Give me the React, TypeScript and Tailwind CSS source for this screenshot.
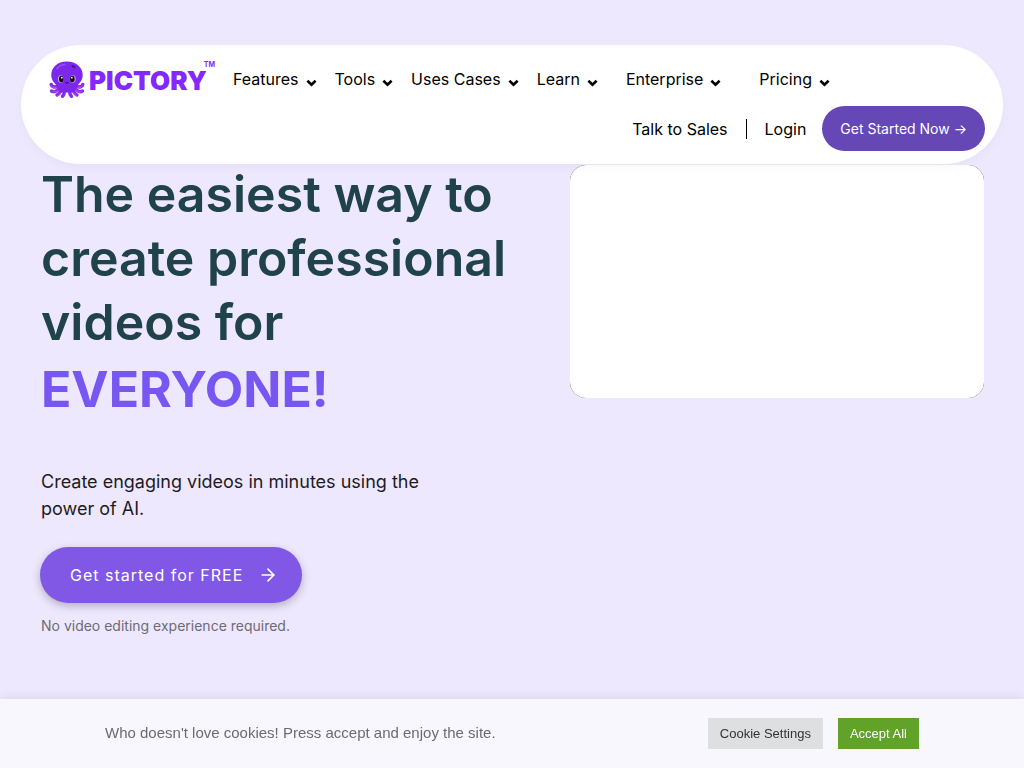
import { ArrowRight } from "lucide-react";

const menu = [
  { label: "Features", className: "mr-[18px]" },
  { label: "Tools", className: "mr-[18px]" },
  { label: "Uses Cases", className: "mr-[18px]" },
  { label: "Learn", className: "mr-7" },
  { label: "Enterprise", className: "mr-[38px]" },
  { label: "Pricing", className: "" },
];

function Octopus() {
  return (
    <svg viewBox="0 0 36 38" className="h-[38px] w-9 shrink-0" fill="none" aria-hidden="true">
      <g stroke="#8a2be8" strokeWidth="3.400" strokeLinecap="round" strokeLinejoin="round">
        <path d="M9 25c-3.500 2-6.500.5-6.800-1.500" />
        <path d="M27 25c3.500 2 6.500.5 6.800-1.500" />
        <path d="M10 27c-2 3.500-5 4.500-7.500 3" />
        <path d="M26 27c2 3.500 5 4.500 7.500 3" />
        <path d="M12 28c-.5 3-2 5-4 6" />
        <path d="M24 28c.5 3 2 5 4 6" />
        <path d="M15.500 29c0 3-.5 5-2 6.300" />
        <path d="M20.500 29c0 3 .5 5 2 6.300" />
      </g>
      <g stroke="#c94df0" strokeWidth="1" strokeLinecap="round">
        <path d="M7 26.500c-1.500.5-3 .2-4-1" />
        <path d="M29 26.500c1.500.5 3 .2 4-1" />
        <path d="M8.500 29.500c-1.200 1.200-3 1.700-4.500 1.200" />
        <path d="M27.500 29.500c1.200 1.200 3 1.700 4.500 1.200" />
        <path d="M11.500 32c-.5 1-1.500 2-2.800 2.500" />
        <path d="M24.500 32c.5 1 1.500 2 2.800 2.500" />
      </g>
      <path
        d="M17.800.500C8.300.500 2.300 6.800 2.300 14c0 5 2.700 7.500 4.900 10l4.300 7.500h13l4.300-7.500c2.200-2.500 4.900-5 4.900-10 0-7.200-6.400-13.500-15.900-13.500Z"
        fill="#7d26ec"
      />
      <path d="M8 8c2-3 5-4.500 8-4.500" stroke="#9650fa" strokeWidth="1.500" strokeLinecap="round" />
      <ellipse cx="24.500" cy="5.500" rx="2.300" ry="1.300" fill="#4d1599" transform="rotate(25 24.500 5.500)" />
      <ellipse cx="11.800" cy="18" rx="3" ry="3.700" fill="#bfa0e0" />
      <ellipse cx="23.800" cy="18" rx="3" ry="3.700" fill="#bfa0e0" />
      <ellipse cx="12.300" cy="18" rx="2.300" ry="3.200" fill="#160b24" />
      <ellipse cx="23.300" cy="18" rx="2.300" ry="3.200" fill="#160b24" />
      <circle cx="12.800" cy="16.700" r=".9" fill="#fff" />
      <circle cx="22.800" cy="16.700" r=".9" fill="#fff" />
      <path d="M16.400 21.500c.8 1.200 2.200 1.200 3 0" stroke="#2b0b55" strokeWidth="1" strokeLinecap="round" />
    </svg>
  );
}

function Logo() {
  return (
    <a href="#" className="relative flex w-[166px] shrink-0 items-center text-[#8428ff]">
      <Octopus />
      <span className="ml-1 pt-0.5 text-[26px] leading-5 font-black">PICTORY</span>
      <span className="absolute top-0 right-0 text-[7px] leading-2 font-bold">TM</span>
    </a>
  );
}

function Chevron() {
  return (
    <svg viewBox="0 0 12 8" className="mt-2 h-2 w-[11px] shrink-0" fill="none" aria-hidden="true">
      <path d="m1.500 1.500 4.500 4.300 4.500-4.300" stroke="#000" strokeWidth="2.800" />
    </svg>
  );
}

function Header() {
  return (
    <header className="relative z-10 mx-[21px] rounded-[60px] bg-white pt-4 pr-[18px] pb-[13px] pl-7 shadow-[0_4px_10px_rgba(0,0,0,0.03)]">
      <div className="flex flex-wrap items-start">
        <Logo />
        <nav className="ml-[18px] flex flex-wrap pt-1.5">
          {menu.map((item) => (
            <button
              key={item.label}
              type="button"
              className={`flex items-center gap-[7px] text-base whitespace-nowrap text-black ${item.className}`}
            >
              {item.label}
              <Chevron />
            </button>
          ))}
        </nav>
      </div>
      <div className="mt-[7px] flex flex-wrap items-center justify-end text-base text-black">
        <a href="#">Talk to Sales</a>
        <span className="mx-[18px] h-5 w-px bg-black" />
        <a href="#">Login</a>
        <a
          href="#"
          className="ml-4 flex h-[45px] items-center rounded-full bg-[#6547b5] px-[18px] text-sm text-white"
        >
          Get Started Now →
        </a>
      </div>
    </header>
  );
}

function Hero() {
  return (
    <main className="grid grid-cols-[1fr_414px] gap-x-8 pr-10 pl-[41px]">
      <section>
        <h1 className="-mt-0.5 text-[50px] leading-[64px] font-semibold text-[#20424a]">
          The easiest way to
          <br />
          create professional
          <br />
          videos for
          <span className="block leading-[70px] font-bold text-[#7856f2]">EVERYONE!</span>
        </h1>
        <p className="mt-11 max-w-[400px] text-lg leading-[27px] text-[#1c1c1e]">
          Create engaging videos in minutes using the power of AI.
        </p>
        <a
          href="#"
          className="mt-[25px] -ml-px inline-flex h-14 items-center gap-[15px] rounded-full bg-[#8058e5] pr-6 pl-[30px] text-base tracking-[1px] text-white shadow-[0_3px_8px_rgba(0,0,0,0.25)]"
        >
          Get started for FREE
          <ArrowRight className="size-5" strokeWidth={2} />
        </a>
        <p className="mt-3 text-sm leading-[22px] text-[#6d6b73]">No video editing experience required.</p>
      </section>
      <div className="mt-px h-[233px] rounded-2xl bg-black">
        <div className="h-full rounded-2xl bg-white" />
      </div>
    </main>
  );
}

function CookieBar() {
  return (
    <aside className="fixed inset-x-0 bottom-0 z-20 flex h-[69px] items-center justify-between bg-[#f8f7fd] px-[105px] font-['Liberation_Sans',Arial,sans-serif] shadow-[0_-1px_10px_rgba(172,171,171,0.3)]">
      <p className="text-[15px] text-[#6c6b70]">
        Who doesn't love cookies! Press accept and enjoy the site.
      </p>
      <div className="flex gap-[15px] text-[13px]">
        <button type="button" className="h-[31px] bg-[#dedfe0] px-3 text-[#333]">
          Cookie Settings
        </button>
        <button type="button" className="h-[31px] bg-[#61a229] px-3 text-white">
          Accept All
        </button>
      </div>
    </aside>
  );
}

export default function App() {
  return (
    <div className="min-h-screen bg-[#eee8ff] pt-[45px] pb-20 font-[Inter,sans-serif]">
      <Header />
      <Hero />
      <CookieBar />
    </div>
  );
}
